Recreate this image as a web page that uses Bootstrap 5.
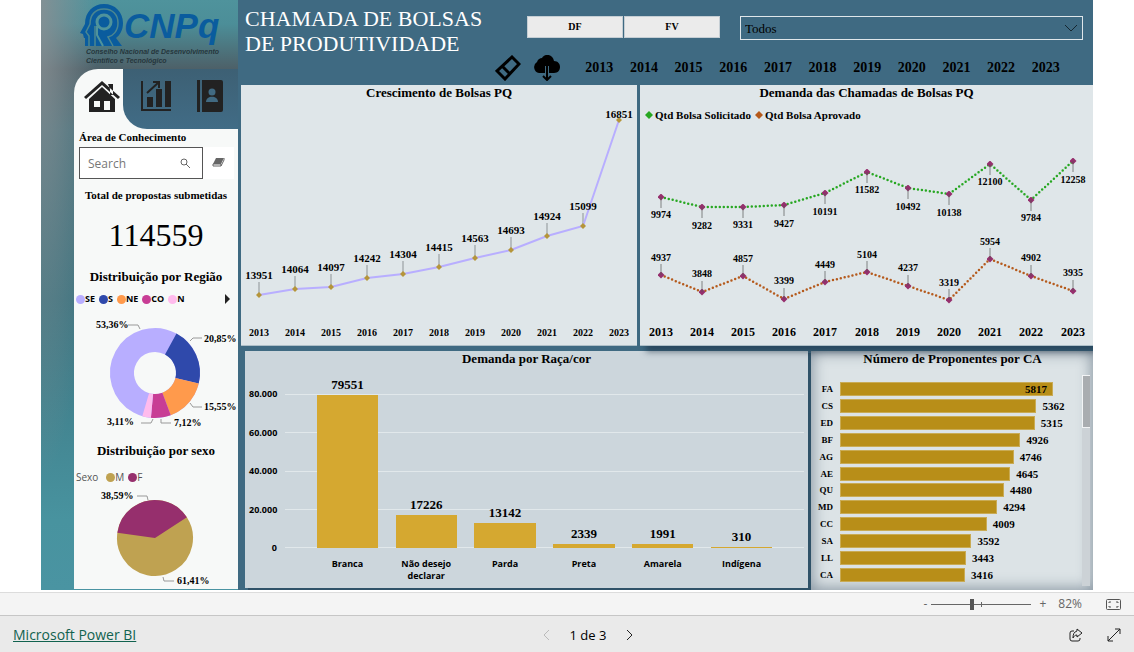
<!DOCTYPE html>
<html lang="pt-BR">
<head>
<meta charset="utf-8">
<meta name="viewport" content="width=device-width, initial-scale=1">
<title>Chamada de Bolsas de Produtividade</title>
<link rel="stylesheet" href="https://cdn.jsdelivr.net/npm/bootstrap@5.3.0/dist/css/bootstrap.min.css">
<style>
  :root { --serif: "Liberation Serif", serif; --ui: "Open Sans", "Noto Sans", sans-serif; --blue: #3f6a82; --panel: #f7f9f8; }
  body { background: #fff; color: #000; font-family: var(--serif); font-size: 11px; line-height: 16px; }
  svg { display: block; }
  svg text { font-family: var(--serif); font-weight: bold; fill: #000; }
  button { color: inherit; }
  .report { margin: 0 41px 2px; background: var(--blue); }

  .side { flex: 0 0 197px; padding-left: 33px;
    background: radial-gradient(56px 480px at 0 0, rgba(136,144,148,.9), rgba(110,144,148,0)),
      linear-gradient(#4f939c 0, #4c8e98 24px, #4d6068 69px, #45717c 130px, #3d7480 300px, #48939f 520px, #4a94a2 590px); }
  .brand { height: 69px; padding: 2px 0 0 6px; }
  .brand .word { font: italic bold 35px "Liberation Sans", sans-serif; fill: #0a5c9e; }
  .brand .motto { font: italic bold 7px "Liberation Sans", sans-serif; fill: #26363c; }
  .tabs { background: var(--panel); height: 60px; border-top-left-radius: 24px; }
  .tabs .home { width: 49px; padding: 12px 0 0 10px; }
  .tabs .others { background: linear-gradient(#3d6074, #416c86); border-bottom-left-radius: 24px; padding: 11px 0 0 17px; gap: 25px; }
  .tool { border: 0; background: none; padding: 0; display: block; }
  .panel { background: var(--panel); }
  .panel h2, .visual h2 { font-size: 13px; line-height: 16px; font-weight: bold; text-align: center; margin: 0; }
  .caption-area { padding-left: 5px; }
  .field { margin: 2px 4px 0 5px; height: 32px; }
  .search { border: 1px solid #555; background: #fff; padding: 0 12px 0 8px; width: 124px; }
  .search input { border: 0; outline: 0; padding: 0; min-width: 0; flex: 1; font: 12px var(--ui); background: none; }
  .search input::placeholder { color: #777; opacity: 1; }
  .wipe { background: #fff; width: 31px; padding: 0 0 2px 9px; }
  .total { font-size: 32px; line-height: 40px; margin: 12px 0 14px; }
  .keys { font: bold 9px/14px var(--ui); padding-left: 2px; margin-top: 7px; }
  .keys i { width: 9px; height: 9px; border-radius: 50%; display: block; background: currentColor; }
  .keys em { font-style: normal; color: #000; }
  .keys.soft { font-weight: normal; font-size: 10px; margin-top: 11px; }
  .keys.soft em { color: #555; }

  .top { height: 85px; }
  .top h1 { font-size: 22px; line-height: 25px; color: #fff; margin: 0; padding: 6px 0 0 7px; width: 257px; font-weight: normal; }
  .filters { padding: 16px 10px 0 32px; }
  .chips { gap: 1px; margin-right: 20px; }
  .chip { width: 96px; height: 22px; border: 1px solid #c5ced4; background: #ebebeb; font-size: 10px; font-weight: bold; padding: 0; line-height: 16px; }
  .pick { height: 24px; border: 1px solid #dfe6ea; border-radius: 0; background-color: transparent; padding: 0 28px 0 4px; font: 13px var(--serif); color: #000;
    background-image: url("data:image/svg+xml,%3Csvg xmlns='http://www.w3.org/2000/svg' viewBox='0 0 14 14'%3E%3Cpath d='M1 4l6 6 6-6' fill='none' stroke='%23152630'/%3E%3C/svg%3E"); background-size: 14px; background-position: right 4px center; }
  .actions { margin-top: 15px; }
  .years { margin: 0 25px 0 16px; }
  .years button { flex: 1 1 0; font-size: 14px; font-weight: bold; line-height: 24px; text-align: center; }

  .visual { background: #dfe6e9; min-width: 0; }
  .upper { gap: 3px; padding-left: 3px; }
  .growth { flex: 396 1 0; border-bottom: 1px solid #aebfc8; }
  .calls { flex: 453 1 0; border-bottom: 1px solid #aebfc8; box-shadow: 6px 6px 6px rgba(20,40,60,.5); clip-path: inset(0 0 -14px -2px); position: relative; }
  .diamonds { font-size: 11px; font-weight: bold; padding: 6px 0 2px 5px; gap: 4px; }
  .diamonds svg { margin-right: 2px; }
  .lower { padding: 5px 0 0 7px; gap: 3px; }
  .race { flex: 563 1 0; background: #ccd6dc; margin-bottom: 2px; height: 237px; box-shadow: 3px 2px 0 #2f5268; }
  .areas { flex: 279 1 0; background: #dce3e6; box-shadow: inset 0 0 14px 2px rgba(60,80,100,.5); padding-right: 3px; }
  .plot { margin: 27px 4px 0 4px; height: 154px; }
  .axis { width: 28px; margin: -6px 8px -6px 0; font: bold 9px/12px var(--ui); text-align: right; }
  .lines div { height: 0; border-top: 1px solid #e1e8eb; }
  .cols { margin: 0 23px; height: 100%; position: relative; }
  .cols > div { flex: 1 1 0; height: 100%; }
  .cols b { font-size: 13px; margin-bottom: 2px; flex-shrink: 0; }
  .cols span { width: 78%; background: #d5a830; flex-shrink: 0; }
  .cats { margin: 10px 27px 0 63px; font: bold 9px/12px var(--ui); }
  .cats div { flex: 1 1 0; text-align: center; padding: 0 10px; }
  .ranks { margin-top: 14px; height: 202px; width: 100%; padding-left: 4px; }
  .ranks > div { flex: 1 1 0; }
  .ranks .code { width: 18px; font-size: 9px; font-weight: bold; text-align: right; margin-right: 7px; }
  .ranks .track { flex: 1; margin-right: 29px; font-weight: bold; }
  .ranks .track span { background: #b88e18; height: 14px; border: 1px solid #c9ab55; flex-shrink: 0; margin-right: 6px; line-height: 13px; text-align: right; padding-right: 5px; }
  .scroll { width: 8px; background: #ccd2d6; margin-top: 24px; margin-bottom: 4px; }
  .scroll div { height: 53px; background: #a9adb0; border: 1px solid #f2f4f5; border-right: 0; }

  .zoombar { height: 24px; background: #f4f4f4; border-top: 1px solid #dcdcdc; border-bottom: 1px solid #c6c6c6; font: 12px/22px var(--ui); color: #666; padding-right: 13px; }
  .zoombar input { width: 100px; height: 12px; appearance: none; margin: 0 8px 0 4px;
    background: linear-gradient(#666, #666) 50px 4px / 1px 5px no-repeat, linear-gradient(#666, #666) 0 6px / 100% 1px no-repeat; }
  .zoombar input::-webkit-slider-thumb { appearance: none; width: 4px; height: 11px; background: #555; }
  .foot { background: #eaeaea; height: 36px; font: 13px/36px var(--ui); padding: 2px 13px 0; }
  .foot a { color: #11624f; font-size: 14px; }
  .foot > * { flex: 1 1 0; }
  .pager { gap: 20px; padding-left: 42px; }
</style>
</head>
<body>
<main class="report d-flex">
  <aside class="side">
    <div class="brand">
      <svg width="150" height="66" viewBox="0 0 150 66" role="img" aria-label="CNPq">
        <path fill="#0a5c9e" d="M5 44V36H4l-1-4-3-1 5-9C5 10 13 2 24 2c11 0 19 8 19 19 0 7-3 12-7 15l6 8z"/>
        <path fill="none" stroke="#4b8690" stroke-width="1.500" d="M9 44V34l-3-4 4-8C10 13 15 7 24 7c9 0 14 6 14 14s-5 13-10 14l5 9M15 44V24"/>
        <circle cx="24" cy="20" r="7" fill="none" stroke="#4f939c" stroke-width="3"/>
        <path fill="none" stroke="#4f939c" stroke-width="2" d="M17 24v9l6 11"/>
        <text class="word" x="44" y="36">CNPq</text>
        <text class="motto" x="6" y="52">Conselho Nacional de Desenvolvimento</text>
        <text class="motto" x="6" y="61">Científico e Tecnológico</text>
      </svg>
    </div>
    <nav class="tabs d-flex" aria-label="Páginas">
      <div class="home"><button class="tool" aria-label="Início">
        <svg width="36" height="32" viewBox="0 0 36 32" fill="#222"><path d="M24 3h5v11h-3V8zM18 0L0 16l2 2L18 4l16 14 2-2z"/><path fill-rule="evenodd" d="M18 6L5 18v13h26V18zM10 20h6v6h-6zM20 20h6v9h-6z"/></svg>
      </button></div>
      <div class="others flex-grow-1 d-flex align-items-start">
        <button class="tool" aria-label="Indicadores"><svg width="31" height="32" viewBox="0 0 31 32"><path fill="none" stroke="#222" stroke-width="2" d="M2 1v29h29"/><path fill="#222" d="M7 17h6v10H7zM16 9h6v18h-6zM25 1h6v26h-6z"/><path fill="none" stroke="#222" stroke-width="2" d="M7 13L19 2M13 2h6v6"/></svg></button>
        <button class="tool" aria-label="Bolsistas"><svg width="28" height="32" viewBox="0 0 28 32" fill="#222"><path d="M1 0h3v32H1zM6 0h19a2 2 0 0 1 2 2v28a2 2 0 0 1-2 2H6z"/><circle cx="16" cy="12" r="3.500" fill="#416a82"/><path fill="#416a82" d="M10 22c0-7 12-7 12 0z"/></svg></button>
      </div>
    </nav>
    <div class="panel">
      <label class="d-block fw-bold caption-area" for="area">Área de Conhecimento</label>
      <div class="field d-flex">
        <div class="search d-flex align-items-center">
          <input id="area" type="search" placeholder="Search">
          <svg width="10" height="10" viewBox="0 0 10 10" fill="none" stroke="#666"><circle cx="4" cy="4" r="3"/><path d="M6 6l4 4"/></svg>
        </div>
        <button class="tool wipe" aria-label="Limpar"><svg width="13" height="10" viewBox="0 0 13 10"><path d="M4 1h8L9 7H1z" fill="#666"/><path d="M1 7h8v2H1zM9 9l3-6V1" fill="#fff" stroke="#666"/></svg></button>
      </div>
      <div class="fw-bold text-center pt-2">Total de propostas submetidas</div>
      <div class="total text-center">114559</div>
      <h2>Distribuição por Região</h2>
      <div class="keys d-flex align-items-center gap-1">
        <span class="d-flex align-items-center" style="color:#b8aeff"><i></i><em>SE</em></span>
        <span class="d-flex align-items-center" style="color:#2f49ab"><i></i><em>S</em></span>
        <span class="d-flex align-items-center" style="color:#ff9a4c"><i></i><em>NE</em></span>
        <span class="d-flex align-items-center" style="color:#c83d95"><i></i><em>CO</em></span>
        <span class="d-flex align-items-center" style="color:#ffbbed"><i></i><em>N</em></span>
        <button class="tool ms-auto me-1 pe-1" aria-label="Mais"><svg width="5" height="10" viewBox="0 0 5 10"><path d="M0 0l5 5-5 5z" fill="#222"/></svg></button>
      </div>
      <svg class="mt-2 w-100" viewBox="0 0 164 121" role="img" aria-label="Distribuição por Região">
        <g fill="none" stroke-width="24" transform="rotate(-61.500 81 59)">
          <circle cx="81" cy="59" r="33" pathLength="100" stroke="#b8aeff"/>
          <circle cx="81" cy="59" r="33" pathLength="100" stroke="#2f49ab" stroke-dasharray="20.850 100"/>
          <circle cx="81" cy="59" r="33" pathLength="100" stroke="#ff9a4c" stroke-dasharray="15.550 100" stroke-dashoffset="-20.850"/>
          <circle cx="81" cy="59" r="33" pathLength="100" stroke="#c83d95" stroke-dasharray="7.120 100" stroke-dashoffset="-36.400"/>
          <circle cx="81" cy="59" r="33" pathLength="100" stroke="#ffbbed" stroke-dasharray="3.110 100" stroke-dashoffset="-43.520"/>
        </g>
        <path fill="none" stroke="#999" d="M54 11h10l2 4M116 27l3-3h9M116 89l3 4h9M87 105v4h10M79 105l-2 4H67"/>
        <g font-size="10"><text x="22" y="14">53,36%</text><text x="130" y="28">20,85%</text><text x="130" y="96">15,55%</text><text x="100" y="112">7,12%</text><text x="33" y="111">3,11%</text></g>
      </svg>
      <h2 class="pt-2">Distribuição por sexo</h2>
      <div class="keys soft d-flex align-items-center gap-1">
        <em class="me-1">Sexo</em>
        <span class="d-flex align-items-center" style="color:#bfa251"><i></i><em>M</em></span>
        <span class="d-flex align-items-center" style="color:#962f6d"><i></i><em>F</em></span>
      </div>
      <svg class="w-100" viewBox="0 0 164 105" role="img" aria-label="Distribuição por sexo">
        <g fill="none" stroke-width="38" transform="rotate(-33 81 54)">
          <circle cx="81" cy="54" r="19" pathLength="100" stroke="#bfa251"/>
          <circle cx="81" cy="54" r="19" pathLength="100" stroke="#962f6d" stroke-dasharray="38.590 100" stroke-dashoffset="-61.410"/>
        </g>
        <path fill="none" stroke="#999" d="M63 12h10l1 4M89 93l1 4h10"/>
        <g font-size="10"><text x="27" y="15">38,59%</text><text x="103" y="100">61,41%</text></g>
      </svg>
    </div>
  </aside>

  <section class="flex-grow-1">
    <header class="top d-flex">
      <h1 class="flex-shrink-0">CHAMADA DE BOLSAS DE PRODUTIVIDADE</h1>
      <div class="flex-grow-1">
        <div class="filters d-flex">
          <div class="chips d-flex"><button class="chip">DF</button><button class="chip">FV</button></div>
          <select class="form-select pick" aria-label="Filtro"><option>Todos</option></select>
        </div>
        <div class="actions d-flex align-items-center">
          <button class="tool" aria-label="Limpar filtros"><svg width="26" height="26" viewBox="0 0 26 26" fill="none" stroke="#000" stroke-width="3"><path d="M17 2l7 7L10 24l-8-8zM7 11l8 8"/></svg></button>
          <button class="tool ms-2 ps-1" aria-label="Baixar dados"><svg width="28" height="26" viewBox="0 0 28 26"><path d="M6 18a6 6 0 0 1-2-11C5 4 7 3 9 3c3-5 11-4 12 3 4 0 6 3 6 6s-2 6-6 6z"/><path d="M14 11v13M10 21l4 4 4-4" fill="none" stroke="#000" stroke-width="2"/><path d="M12.500 11v7M15.500 11v7" stroke="#3f6a82" stroke-width="1"/></svg></button>
          <div class="years d-flex flex-grow-1">
            <button class="tool">2013</button><button class="tool">2014</button><button class="tool">2015</button><button class="tool">2016</button><button class="tool">2017</button><button class="tool">2018</button><button class="tool">2019</button><button class="tool">2020</button><button class="tool">2021</button><button class="tool">2022</button><button class="tool">2023</button>
          </div>
        </div>
      </div>
    </header>

    <div class="upper d-flex align-items-stretch">
      <article class="visual growth">
        <h2>Crescimento de Bolsas PQ</h2>
        <svg class="w-100" viewBox="0 0 396 244" text-anchor="middle" role="img" aria-label="Crescimento de Bolsas PQ">
          <defs><marker id="gold" viewBox="0 0 6 6" refX="3" refY="3" markerWidth="6" markerHeight="6" markerUnits="userSpaceOnUse"><path d="M3 0l3 3-3 3-3-3z" fill="#b5953a"/></marker></defs>
          <path stroke="#8d9396" d="M18 194v-13M54 188v-13M90 186v-13M126 177v-13M162 173v-13M198 166v-13M234 157v-13M270 149v-13M306 135v-13M342 125v-13"/>
          <polyline fill="none" stroke="#b8aeff" stroke-width="2" marker-start="url(#gold)" marker-mid="url(#gold)" marker-end="url(#gold)" points="18,194 54,188 90,186 126,177 162,173 198,166 234,157 270,149 306,135 342,125 378,19"/>
          <g font-size="11"><text x="18" y="178">13951</text><text x="54" y="172">14064</text><text x="90" y="170">14097</text><text x="126" y="161">14242</text><text x="162" y="157">14304</text><text x="198" y="150">14415</text><text x="234" y="141">14563</text><text x="270" y="133">14693</text><text x="306" y="119">14924</text><text x="342" y="109">15099</text><text x="378" y="17">16851</text></g>
          <g font-size="10"><text x="18" y="235">2013</text><text x="54" y="235">2014</text><text x="90" y="235">2015</text><text x="126" y="235">2016</text><text x="162" y="235">2017</text><text x="198" y="235">2018</text><text x="234" y="235">2019</text><text x="270" y="235">2020</text><text x="306" y="235">2021</text><text x="342" y="235">2022</text><text x="378" y="235">2023</text></g>
        </svg>
      </article>
      <article class="visual calls">
        <h2>Demanda das Chamadas de Bolsas PQ</h2>
        <div class="diamonds d-flex">
          <span class="d-flex align-items-center"><svg width="8" height="8" viewBox="0 0 8 8"><path d="M4 0l4 4-4 4-4-4z" fill="#27a722"/></svg>Qtd Bolsa Solicitado</span>
          <span class="d-flex align-items-center"><svg width="8" height="8" viewBox="0 0 8 8"><path d="M4 0l4 4-4 4-4-4z" fill="#b55a1c"/></svg>Qtd Bolsa Aprovado</span>
        </div>
        <svg class="w-100" viewBox="0 0 453 220" text-anchor="middle" role="img" aria-label="Demanda das Chamadas de Bolsas PQ">
          <defs><marker id="plum" viewBox="0 0 8 8" refX="4" refY="4" markerWidth="7" markerHeight="7" markerUnits="userSpaceOnUse"><path d="M4 0l4 4-4 4-4-4z" fill="#962f6d"/></marker></defs>
          <g fill="none" stroke-width="2.500" stroke-linecap="round" stroke-dasharray="0 4">
            <polyline stroke="#27a722" marker-start="url(#plum)" marker-mid="url(#plum)" marker-end="url(#plum)" points="21,72 62,82 103,82 144,80 185,68 227,47 268,63 309,69 350,39 391,75 433,36"/>
            <polyline stroke="#b55a1c" marker-start="url(#plum)" marker-mid="url(#plum)" marker-end="url(#plum)" points="21,150 62,167 103,151 144,174 185,157 227,147 268,161 309,175 350,134 391,151 433,166"/>
          </g>
          <path stroke="#555" stroke-opacity=".7" d="M21 72v11M62 82v11M103 82v11M144 80v11M185 68v11M227 47v11M268 63v11M309 69v11M350 39v11M391 75v11M433 36v11M21 150v-11M62 167v-11M103 151v-11M144 174v-11M185 157v-11M227 147v-11M268 161v-11M309 175v-11M350 134v-11M391 151v-11M433 166v-11"/>
          <g font-size="10"><text x="21" y="93">9974</text><text x="62" y="104">9282</text><text x="103" y="103">9331</text><text x="144" y="102">9427</text><text x="185" y="90">10191</text><text x="227" y="68">11582</text><text x="268" y="85">10492</text><text x="309" y="91">10138</text><text x="350" y="60">12100</text><text x="391" y="96">9784</text><text x="433" y="58">12258</text>
          <text x="21" y="136">4937</text><text x="62" y="152">3848</text><text x="103" y="137">4857</text><text x="144" y="159">3399</text><text x="185" y="143">4449</text><text x="227" y="133">5104</text><text x="268" y="146">4237</text><text x="309" y="161">3319</text><text x="350" y="120">5954</text><text x="391" y="136">4902</text><text x="433" y="151">3935</text></g>
          <g font-size="12"><text x="21" y="211">2013</text><text x="62" y="211">2014</text><text x="103" y="211">2015</text><text x="144" y="211">2016</text><text x="185" y="211">2017</text><text x="227" y="211">2018</text><text x="268" y="211">2019</text><text x="309" y="211">2020</text><text x="350" y="211">2021</text><text x="391" y="211">2022</text><text x="433" y="211">2023</text></g>
        </svg>
      </article>
    </div>

    <div class="lower d-flex">
      <article class="visual race">
        <h2>Demanda por Raça/cor</h2>
        <div class="plot d-flex">
          <div class="axis d-flex flex-column justify-content-between"><span>80.000</span><span>60.000</span><span>40.000</span><span>20.000</span><span>0</span></div>
          <div class="position-relative flex-grow-1">
            <div class="lines position-absolute top-0 bottom-0 start-0 end-0 d-flex flex-column justify-content-between"><div></div><div></div><div></div><div></div><div></div></div>
            <div class="cols d-flex">
              <div class="d-flex flex-column justify-content-end align-items-center"><b>79551</b><span style="height:99.4%"></span></div>
              <div class="d-flex flex-column justify-content-end align-items-center"><b>17226</b><span style="height:21.5%"></span></div>
              <div class="d-flex flex-column justify-content-end align-items-center"><b>13142</b><span style="height:16.4%"></span></div>
              <div class="d-flex flex-column justify-content-end align-items-center"><b>2339</b><span style="height:2.9%"></span></div>
              <div class="d-flex flex-column justify-content-end align-items-center"><b>1991</b><span style="height:2.5%"></span></div>
              <div class="d-flex flex-column justify-content-end align-items-center"><b>310</b><span style="height:0.4%"></span></div>
            </div>
          </div>
        </div>
        <div class="cats d-flex"><div>Branca</div><div>Não desejo declarar</div><div>Parda</div><div>Preta</div><div>Amarela</div><div>Indígena</div></div>
      </article>
      <article class="visual areas d-flex">
        <div class="flex-grow-1">
          <h2 class="ms-2 ps-1">Número de Proponentes por CA</h2>
          <div class="ranks d-flex flex-column">
            <div class="d-flex align-items-center"><div class="code">FA</div><div class="track d-flex align-items-center"><span style="width:100%">5817</span></div></div>
            <div class="d-flex align-items-center"><div class="code">CS</div><div class="track d-flex align-items-center"><span style="width:92.2%"></span>5362</div></div>
            <div class="d-flex align-items-center"><div class="code">ED</div><div class="track d-flex align-items-center"><span style="width:91.4%"></span>5315</div></div>
            <div class="d-flex align-items-center"><div class="code">BF</div><div class="track d-flex align-items-center"><span style="width:84.7%"></span>4926</div></div>
            <div class="d-flex align-items-center"><div class="code">AG</div><div class="track d-flex align-items-center"><span style="width:81.6%"></span>4746</div></div>
            <div class="d-flex align-items-center"><div class="code">AE</div><div class="track d-flex align-items-center"><span style="width:79.9%"></span>4645</div></div>
            <div class="d-flex align-items-center"><div class="code">QU</div><div class="track d-flex align-items-center"><span style="width:77%"></span>4480</div></div>
            <div class="d-flex align-items-center"><div class="code">MD</div><div class="track d-flex align-items-center"><span style="width:73.8%"></span>4294</div></div>
            <div class="d-flex align-items-center"><div class="code">CC</div><div class="track d-flex align-items-center"><span style="width:68.9%"></span>4009</div></div>
            <div class="d-flex align-items-center"><div class="code">SA</div><div class="track d-flex align-items-center"><span style="width:61.7%"></span>3592</div></div>
            <div class="d-flex align-items-center"><div class="code">LL</div><div class="track d-flex align-items-center"><span style="width:59.2%"></span>3443</div></div>
            <div class="d-flex align-items-center"><div class="code">CA</div><div class="track d-flex align-items-center"><span style="width:58.7%"></span>3416</div></div>
          </div>
        </div>
        <div class="scroll"><div></div></div>
      </article>
    </div>
  </section>
</main>

<div class="zoombar d-flex align-items-center justify-content-end">
  <button class="tool" aria-label="Diminuir zoom">-</button>
  <input type="range" min="0" max="100" value="40" aria-label="Zoom">
  <button class="tool" aria-label="Aumentar zoom">+</button>
  <span class="ms-2 ps-1">82%</span>
  <button class="tool ms-4" aria-label="Ajustar à página"><svg width="15" height="11" viewBox="0 0 15 11" fill="none" stroke="#555"><rect x=".5" y=".5" width="14" height="10" rx="1"/><path d="M3 4V3h2M10 3h2v1M3 7v1h2M10 8h2V7"/></svg></button>
</div>
<footer class="foot d-flex align-items-center">
  <div><a href="#">Microsoft Power BI</a></div>
  <div class="pager d-flex align-items-center justify-content-center">
    <button class="tool" aria-label="Página anterior"><svg width="8" height="12" viewBox="0 0 8 12" fill="none" stroke="#bbb"><path d="M7 1L2 6l5 5"/></svg></button>
    <span>1 de 3</span>
    <button class="tool" aria-label="Próxima página"><svg width="8" height="12" viewBox="0 0 8 12" fill="none" stroke="#222"><path d="M1 1l5 5-5 5"/></svg></button>
  </div>
  <div class="d-flex justify-content-end gap-4">
    <button class="tool" aria-label="Compartilhar"><svg width="14" height="14" viewBox="0 0 14 14" fill="none" stroke="#222"><path d="M5 3H3a2 2 0 0 0-2 2v6a2 2 0 0 0 2 2h6a2 2 0 0 0 2-2v-1M8 1l5 4-5 4V7C6 7 5 8 4 10c0-4 1-6 4-7z"/></svg></button>
    <button class="tool" aria-label="Tela inteira"><svg width="14" height="14" viewBox="0 0 14 14" fill="none" stroke="#222"><path d="M1 13L13 1M8 1h5v5M1 8v5h5"/></svg></button>
  </div>
</footer>
<script src="https://cdn.jsdelivr.net/npm/bootstrap@5.3.0/dist/js/bootstrap.bundle.min.js"></script>
</body>
</html>
